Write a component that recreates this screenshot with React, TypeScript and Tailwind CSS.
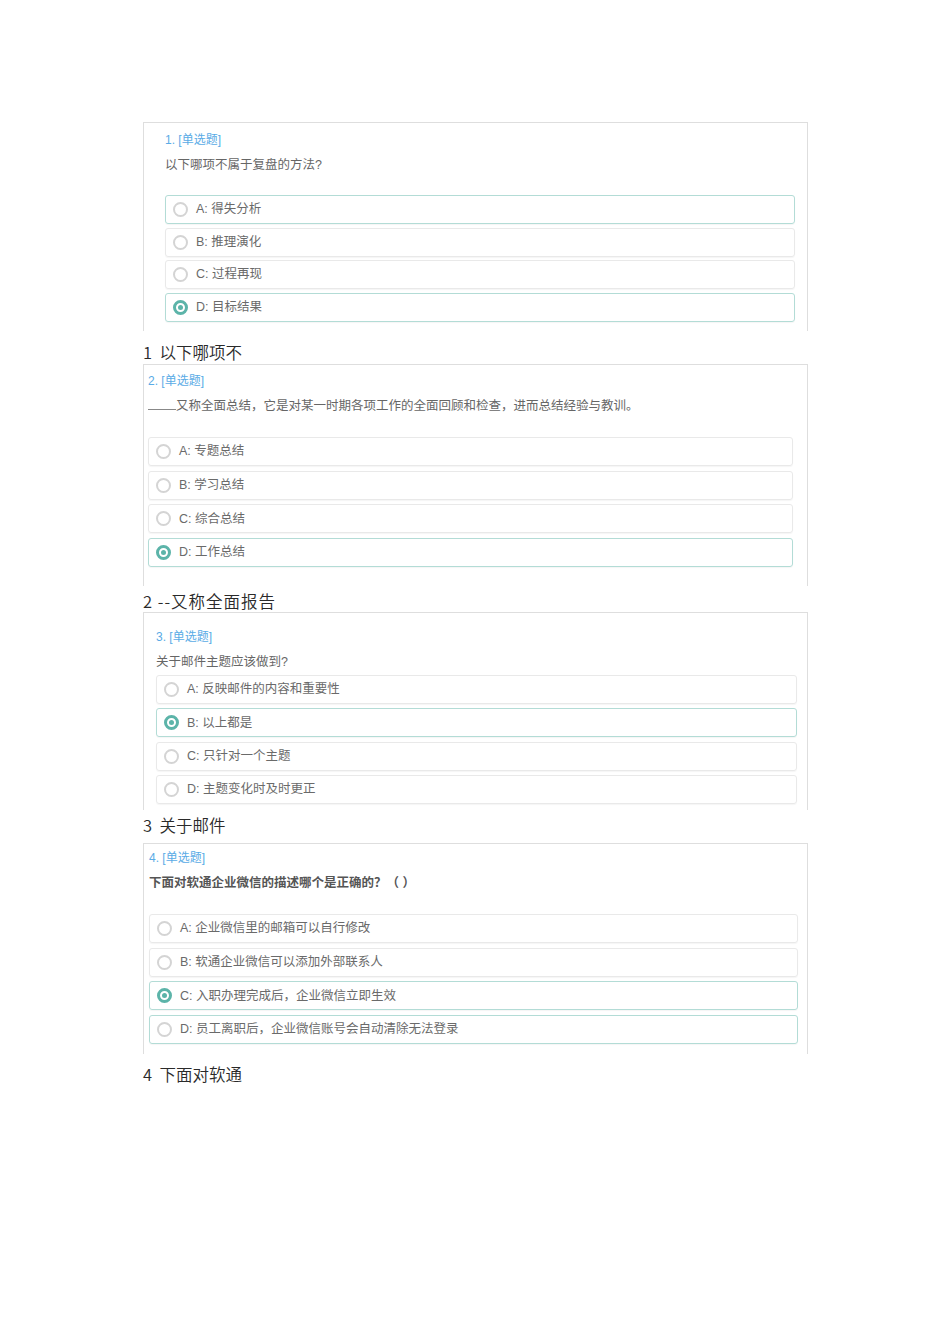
import React from "react";

type Option = { key: string; text: string; checked?: boolean; teal?: boolean };

const Radio = ({ checked }: { checked?: boolean }) =>
  checked ? (
    <span className="flex h-[15px] w-[15px] shrink-0 items-center justify-center rounded-full border-[3px] border-[#5cb4a9]">
      <span className="h-[5px] w-[5px] rounded-full bg-[#5cb4a9]" />
    </span>
  ) : (
    <span className="h-[15px] w-[15px] shrink-0 rounded-full border-[2.5px] border-[#d4d4d4]" />
  );

const OptionRow = ({ opt }: { opt: Option }) => (
  <div
    className={`flex h-[29px] items-center gap-[8px] rounded-[3px] border pl-[7px] shadow-[0_1px_1px_rgba(0,0,0,0.04)] ${
      opt.teal || opt.checked ? "border-[#b3dcd6]" : "border-[#e9e9e9]"
    }`}
  >
    <Radio checked={opt.checked} />
    <span className="text-[12.5px] leading-none text-[#6a6a6a]">
      {opt.key}: {opt.text}
    </span>
  </div>
);

interface PanelProps {
  num: number;
  question: React.ReactNode;
  options: Option[];
  height: string;
  pad: string;
  qGap: string;
  optGap: string;
  bold?: boolean;
}

const Panel = ({ num, question, options, height, pad, qGap, optGap, bold }: PanelProps) => (
  <div className={`w-[665px] border-x border-t border-[#dedede] ${height} ${pad}`}>
    <div className="text-[12px] leading-[16px] text-[#5aabe6]">{num}. [单选题]</div>
    <div
      className={`mt-[7px] text-[12.5px] leading-[20px] ${
        bold ? "font-bold text-[#555]" : "text-[#666]"
      }`}
    >
      {question}
    </div>
    <div className={`flex flex-col ${qGap} ${optGap}`}>
      {options.map((o) => (
        <OptionRow key={o.key} opt={o} />
      ))}
    </div>
  </div>
);

const Caption = ({ children, cls }: { children: React.ReactNode; cls: string }) => (
  <div
    className={`text-[16.5px] leading-[20px] text-[#2a2a2a] ${cls}`}
    style={{ fontFamily: '"Noto Sans CJK SC", sans-serif', fontWeight: 350 }}
  >
    {children}
  </div>
);

export default function App() {
  return (
    <div
      className="min-h-[1344px] bg-white pl-[143px] pt-[122px]"
      style={{ fontFamily: '"Liberation Sans", "Noto Sans CJK SC", sans-serif' }}
    >
      <Panel
        num={1}
        question="以下哪项不属于复盘的方法?"
        height="h-[209px]"
        pad="pt-[9px] pl-[21px] pr-[12px]"
        qGap="mt-[20px]"
        optGap="gap-[3.5px]"
        options={[
          { key: "A", text: "得失分析", teal: true },
          { key: "B", text: "推理演化" },
          { key: "C", text: "过程再现" },
          { key: "D", text: "目标结果", checked: true },
        ]}
      />
      <Caption cls="h-[33px] pt-[11px]">1&nbsp;&nbsp;以下哪项不</Caption>

      <Panel
        num={2}
        question={
          <>
            <span className="inline-block w-[28px] border-b border-[#888] align-baseline" />
            又称全面总结，它是对某一时期各项工作的全面回顾和检查，进而总结经验与教训。
          </>
        }
        height="h-[222px]"
        pad="pt-[8px] pl-[4px] pr-[14px]"
        qGap="mt-[21px]"
        optGap="gap-[4.7px]"
        options={[
          { key: "A", text: "专题总结" },
          { key: "B", text: "学习总结" },
          { key: "C", text: "综合总结" },
          { key: "D", text: "工作总结", checked: true },
        ]}
      />
      <Caption cls="h-[26px] pt-[5px] tracking-[1px]">2 --又称全面报告</Caption>

      <Panel
        num={3}
        question="关于邮件主题应该做到?"
        height="h-[198px]"
        pad="pt-[16px] pl-[12px] pr-[10px]"
        qGap="mt-[3px]"
        optGap="gap-[4.3px]"
        options={[
          { key: "A", text: "反映邮件的内容和重要性" },
          { key: "B", text: "以上都是", checked: true },
          { key: "C", text: "只针对一个主题" },
          { key: "D", text: "主题变化时及时更正" },
        ]}
      />
      <Caption cls="h-[33px] pt-[5px]">3&nbsp;&nbsp;关于邮件</Caption>

      <Panel
        num={4}
        question="下面对软通企业微信的描述哪个是正确的？（ ）"
        bold
        height="h-[211px]"
        pad="pt-[6px] pl-[5px] pr-[9px]"
        qGap="mt-[21px]"
        optGap="gap-[4.7px]"
        options={[
          { key: "A", text: "企业微信里的邮箱可以自行修改" },
          { key: "B", text: "软通企业微信可以添加外部联系人" },
          { key: "C", text: "入职办理完成后，企业微信立即生效", checked: true },
          { key: "D", text: "员工离职后，企业微信账号会自动清除无法登录", teal: true },
        ]}
      />
      <Caption cls="pt-[10px]">4&nbsp;&nbsp;下面对软通</Caption>
    </div>
  );
}
